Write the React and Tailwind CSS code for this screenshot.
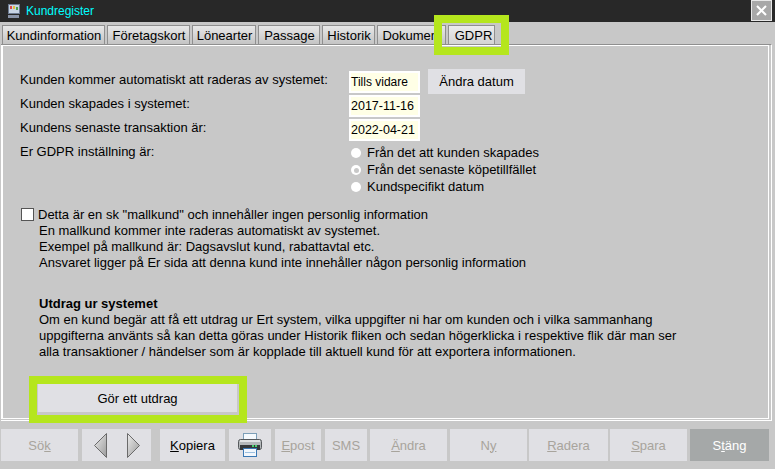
import React from 'react';

const tabs = [
  { label: 'Kundinformation', w: 'w-[103px]' },
  { label: 'Företagskort', w: 'w-[83px]' },
  { label: 'Lönearter', w: 'w-[64px]' },
  { label: 'Passage', w: 'w-[62px]' },
  { label: 'Historik', w: 'w-[53px]' },
  { label: 'Dokument', w: 'w-[69px]' },
  { label: 'GDPR', w: 'w-[47px]', active: true },
];

const Tab = ({ label, w, active }) => (
  <div
    className={`${w} h-[19px] pt-[1px] shrink-0 flex items-center justify-center overflow-hidden border border-[#8f8f8f] border-b-0 text-[13px] text-black bg-gradient-to-b ${active ? 'pl-[4px] from-[#ececec] to-[#d4d4d4]' : 'pl-[1px] from-[#e8e8e8] to-[#c4c4c4]'}`}
  >
    {label}
  </div>
);

const Field = ({ children }) => (
  <div className="w-[71px] h-[22px] border-2 border-white bg-[#ffffe6] flex items-center text-[12.5px] text-black">
    {children}
  </div>
);

const Radio = ({ label, selected, className = '' }) => (
  <div className={`flex items-center h-[16px] gap-[6px] ${className}`}>
    <span className="w-[10px] h-[10px] rounded-full bg-white flex items-center justify-center">
      {selected && <span className="w-[5px] h-[5px] rounded-full bg-[#c8c8c8]" />}
    </span>
    <span>{label}</span>
  </div>
);

const FootBtn = ({ w, children, disabled, dark, icon }) => (
  <div
    className={`${w} h-[32px] shrink-0 flex items-center justify-center text-[13px] ${icon ? '' : 'pt-[1px]'} ${dark ? 'bg-[#a5a8a8] text-white' : 'bg-[#e0e0e4]'} ${disabled ? 'text-[#a8a49c]' : ''}`}
  >
    {children}
  </div>
);

const Arrow = ({ left }) => (
  <svg width="13" height="25" viewBox="0 0 13 25">
    <defs>
      <linearGradient id={left ? 'ga' : 'gb'} x1="0" y1="0" x2="1" y2="1">
        <stop offset="0" stopColor="#ececec" />
        <stop offset="1" stopColor="#9a9a9a" />
      </linearGradient>
    </defs>
    <path
      d={left ? 'M12.5 .5 L.5 12.5 L12.5 24.5 Z' : 'M.5 .5 L12.5 12.5 L.5 24.5 Z'}
      fill={`url(#${left ? 'ga' : 'gb'})`}
      stroke="#6a6a6a"
    />
  </svg>
);

const Printer = () => (
  <svg width="24" height="24" viewBox="0 0 24 24">
    <rect x="5.5" y=".5" width="13" height="7" fill="#f6fafd" stroke="#7d9fb8" />
    <rect x=".5" y="6.5" width="23" height="10" rx="2" fill="#b4b8ba" stroke="#55595c" />
    <rect x="2" y="7" width="20" height="2" fill="#e2e4e5" />
    <rect x="2" y="12" width="20" height="5" fill="#35393b" />
    <rect x="14" y="12" width="2" height="2" fill="#48d070" />
    <rect x="17" y="12" width="2" height="2" fill="#48d070" />
    <rect x="5.5" y="15.5" width="13" height="8" fill="#f2f7fc" stroke="#3a78b4" />
    <path d="M7 19.5 H17" stroke="#9cc0e0" />
  </svg>
);

export default function App() {
  return (
    <div
      className="relative w-[775px] h-[469px] overflow-hidden bg-[#c8c8c8] text-[13px] leading-[16px] text-black"
      style={{ fontFamily: '"Liberation Sans", Arial, sans-serif' }}
    >
      {/* Title bar */}
      <div className="h-[22px] bg-[#282828] flex items-start justify-between pl-[7px] pr-[3px]">
        <div className="flex items-center gap-[5px] h-[22px]">
          <svg width="14" height="16" viewBox="0 0 14 16">
            <rect x="1.5" y="1.5" width="11" height="9" fill="#c8d4e4" stroke="#6d7a90" />
            <rect x="3" y="3" width="2" height="3" fill="#d84a4a" />
            <rect x="6" y="3" width="2" height="3" fill="#e0c040" />
            <rect x="9" y="4" width="2" height="3" fill="#4aa050" />
            <rect x="1" y="12" width="11" height="3" fill="#8a94a8" />
          </svg>
          <span className="text-[12px] text-[#00ffff]">Kundregister</span>
        </div>
        <div className="w-[21px] h-[21px] bg-[#a8a8a8] border border-[#e8e8e8] flex items-center justify-center">
          <svg width="11" height="11" viewBox="0 0 11 11">
            <path d="M1 1 L10 10 M10 1 L1 10" stroke="#fff" strokeWidth="2" />
          </svg>
        </div>
      </div>

      {/* Tabs */}
      <div className="flex gap-[2px] pl-[2px] pt-[3px] h-[22px]">
        {tabs.map((t) => (
          <Tab key={t.label} {...t} />
        ))}
      </div>

      {/* Panel */}
      <div className="ml-[1px] mr-[3px] h-[377px] border-t border-t-[#8f8f8f] border-r border-b border-r-white border-b-white pr-[2px] pb-[1px]">
        <div className="h-full border-t border-r border-b border-l-2 border-white pl-[17px] pt-[23px]">
          <div className="grid grid-cols-[329px_1fr]">
            <div className="pt-[3px]">Kunden kommer automatiskt att raderas av systemet:</div>
            <div className="flex items-start gap-[8px]">
              <div className="mt-[2px]">
                <Field><span className="text-[12px]">Tills vidare</span></Field>
              </div>
              <div className="w-[97px] h-[25px] bg-[#e0e0e4] flex items-center justify-center">Ändra datum</div>
            </div>
            <div className="mt-[2px]">Kunden skapades i systemet:</div>
            <div className="mt-[1px] mb-[2px]"><Field>2017-11-16</Field></div>
            <div className="pt-[1px]">Kundens senaste transaktion är:</div>
            <div className="mb-[2px]"><Field>2022-04-21</Field></div>
            <div className="pt-[1px]">Er GDPR inställning är:</div>
            <div className="pl-[2px] pt-[2px]">
              <Radio label="Från det att kunden skapades" />
              <Radio label="Från det senaste köpetillfället" selected className="mt-[1px]" />
              <Radio label="Kundspecifikt datum" className="mt-[1px]" />
            </div>
          </div>

          <div className="flex mt-[12px] ml-[1px]">
            <span className="mt-[1px] w-[13px] h-[13px] border border-[#555] bg-white shrink-0" />
            <div className="ml-[4px]">
              <div>Detta är en sk "mallkund" och innehåller ingen personlig information</div>
              <div className="pl-[1px]">
                <div>En mallkund kommer inte raderas automatiskt av systemet.</div>
                <div>Exempel på mallkund är: Dagsavslut kund, rabattavtal etc.</div>
                <div>Ansvaret ligger på Er sida att denna kund inte innehåller någon personlig information</div>
              </div>
            </div>
          </div>

          <div className="ml-[19px] mt-[25px]">
            <div className="font-bold">Utdrag ur systemet</div>
            <div>Om en kund begär att få ett utdrag ur Ert system, vilka uppgifter ni har om kunden och i vilka sammanhang</div>
            <div>uppgifterna använts så kan detta göras under Historik fliken och sedan högerklicka i respektive flik där man ser</div>
            <div>alla transaktioner / händelser som är kopplade till aktuell kund för att exportera informationen.</div>
          </div>

          <div className="ml-[18px] mt-[24px] w-[199px] h-[28px] pt-[1px] bg-[#e0e0e4] flex items-center justify-center">Gör ett utdrag</div>
        </div>
      </div>

      {/* Footer buttons */}
      <div className="flex pl-[1px] mt-[8px]">
        <FootBtn w="w-[77px] mr-[4px]" disabled><span>Sö<u>k</u></span></FootBtn>
        <FootBtn w="w-[69px] mr-[9px] gap-[20px]" icon><Arrow left /><Arrow /></FootBtn>
        <FootBtn w="w-[65px] mr-[4px]"><span><u>K</u>opiera</span></FootBtn>
        <FootBtn w="w-[42px] mr-[4px]" icon><Printer /></FootBtn>
        <FootBtn w="w-[46px] mr-[4px]" disabled><span><u>E</u>post</span></FootBtn>
        <FootBtn w="w-[42px] mr-[3px]" disabled>SMS</FootBtn>
        <FootBtn w="w-[77px] mr-[3px]" disabled><span><u>Ä</u>ndra</span></FootBtn>
        <FootBtn w="w-[77px] mr-[2px]" disabled><span>N<u>y</u></span></FootBtn>
        <FootBtn w="w-[79px] mr-[2px]" disabled><span><u>R</u>adera</span></FootBtn>
        <FootBtn w="w-[77px] mr-[3px]" disabled><span><u>S</u>para</span></FootBtn>
        <FootBtn w="w-[79px]" dark><span>S<u>t</u>äng</span></FootBtn>
      </div>

      {/* Highlight annotations */}
      <div className="absolute left-[434px] top-[15px] w-[75px] h-[40px] border-[8px] border-[#b5e61d]" />
      <div className="absolute left-[29px] top-[376px] w-[218px] h-[47px] border-[8px] border-[#b5e61d]" />
    </div>
  );
}
